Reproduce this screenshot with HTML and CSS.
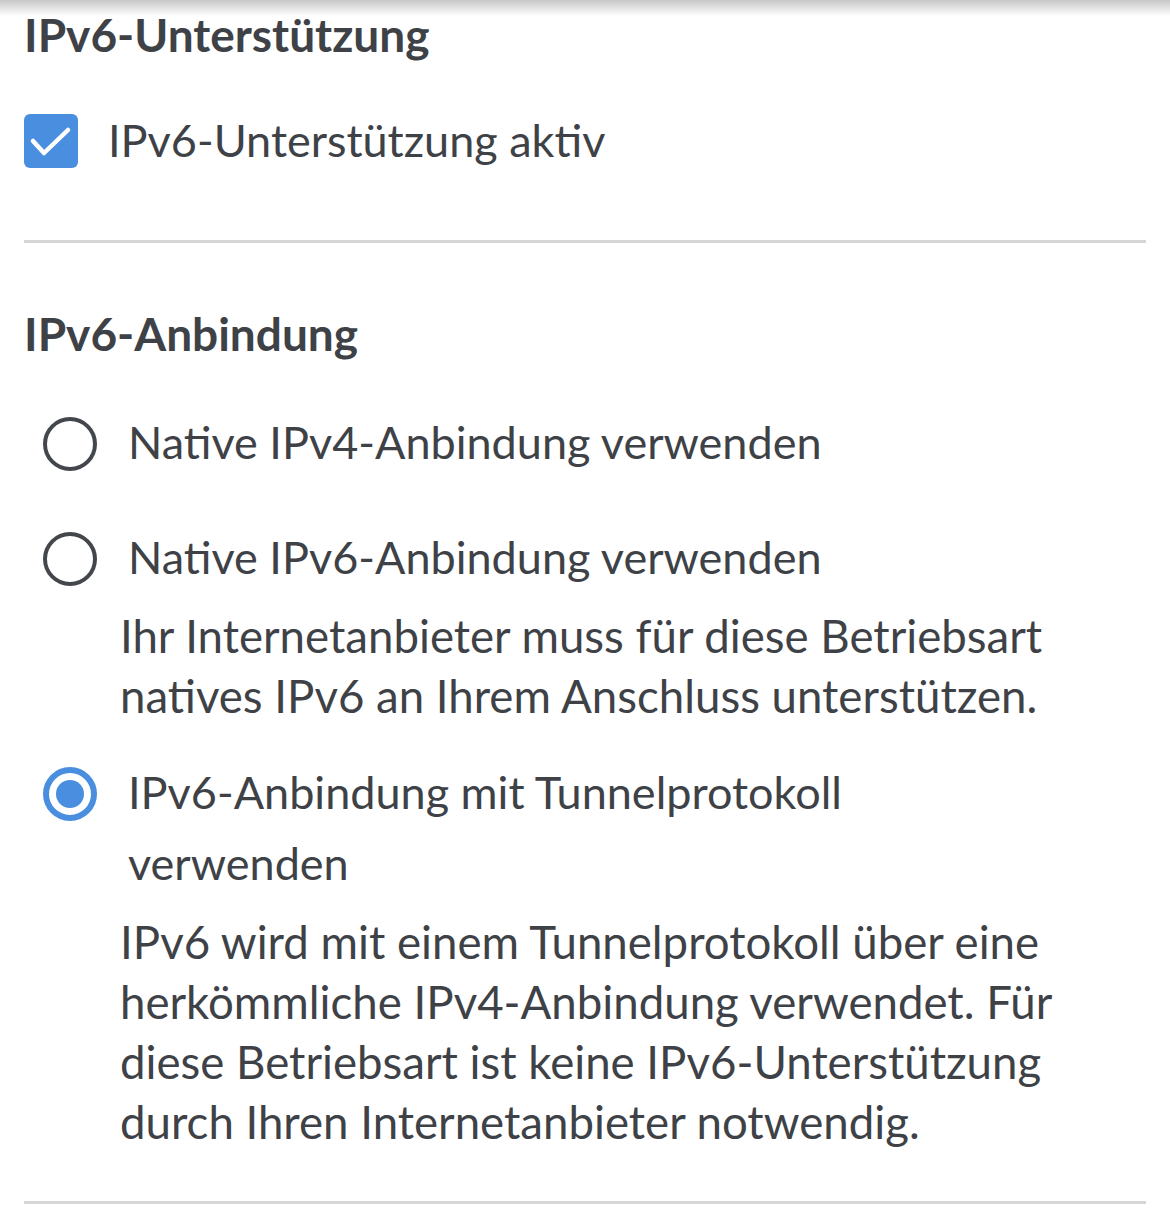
FILE: index.html
```html
<!DOCTYPE html>
<html lang="de">
<head>
<meta charset="utf-8">
<link rel="stylesheet" href="styles.css">
</head>
<body>
<div class="top-shadow"></div>
<main class="page">
  <section class="group">
    <h2 class="group-title">IPv6-Unterstützung</h2>
    <label class="check-row">
      <span class="checkbox">
        <svg viewBox="0 0 54 54" width="54" height="54"><path d="M9 27 L20 39 L44 16" fill="none" stroke="#fff" stroke-width="4.5" stroke-linecap="round" stroke-linejoin="round"/></svg>
      </span>
      <span class="check-label">IPv6-Unterstützung aktiv</span>
    </label>
  </section>
  <hr class="divider">
  <section class="group group-last">
    <h2 class="group-title title-2">IPv6-Anbindung</h2>
    <div class="radio-row">
      <span class="radio"></span>
      <span class="radio-label">Native IPv4-Anbindung verwenden</span>
    </div>
    <div class="radio-row">
      <span class="radio"></span>
      <span class="radio-label">Native IPv6-Anbindung verwenden</span>
    </div>
    <p class="desc">Ihr Internetanbieter muss für diese Betriebsart natives IPv6 an Ihrem Anschluss unterstützen.</p>
    <div class="radio-row after-desc">
      <span class="radio checked"></span>
      <span class="radio-label">IPv6-Anbindung mit Tunnelprotokoll verwenden</span>
    </div>
    <p class="desc">IPv6 wird mit einem Tunnelprotokoll über eine herkömmliche IPv4-Anbindung verwendet. Für diese Betriebsart ist keine IPv6-Unterstützung durch Ihren Internetanbieter notwendig.</p>
  </section>
  <hr class="divider">
</main>
</body>
</html>
```
FILE: styles.css
```css
html, body {
  margin: 0;
  padding: 0;
  background: #ffffff;
}
body {
  font-family: "Lato", "Noto Sans", sans-serif;
  color: #3e4247;
  width: 1170px;
  overflow: hidden;
}
.top-shadow {
  position: absolute;
  left: 0;
  top: 0;
  width: 1170px;
  height: 16px;
  background: linear-gradient(to bottom, rgba(0,0,0,0.22), rgba(0,0,0,0));
}
.page {
  padding: 0 24px;
}
.group-title {
  margin: 0;
  font-size: 46px;
  font-weight: 700;
  line-height: 70px;
}
.title-2 {
  margin-top: 56px;
}
.check-row {
  display: flex;
  align-items: center;
  margin-top: 44px;
  margin-bottom: 72px;
}
.checkbox {
  width: 54px;
  height: 54px;
  border-radius: 6px;
  background: #4a8fdf;
  display: flex;
  flex-shrink: 0;
}
.check-label {
  margin-left: 30px;
  font-size: 45px;
  line-height: 56px;
  margin-top: -3px;
}
.divider {
  border: 0;
  height: 3px;
  background: #d6d6d6;
  margin: 0;
}
.group-last {
  padding-bottom: 48px;
}
.radio-row {
  display: flex;
  align-items: flex-start;
  margin-top: 44px;
  padding-left: 19px;
}
.radio-row.after-desc {
  margin-top: 30px;
}
.title-2 + .radio-row {
  margin-top: 38px;
}
.radio {
  width: 46px;
  height: 46px;
  border: 4px solid #43474c;
  border-radius: 50%;
  flex-shrink: 0;
  margin-top: 10px;
  box-sizing: content-box;
  position: relative;
}
.radio.checked {
  width: 42px;
  height: 42px;
  border: 6px solid #4a8fdf;
}
.radio.checked::after {
  content: "";
  position: absolute;
  left: 7px;
  top: 7px;
  width: 28px;
  height: 28px;
  border-radius: 50%;
  background: #4a8fdf;
}
.radio-label {
  margin-left: 31px;
  font-size: 45px;
  line-height: 71px;
  max-width: 820px;
}
.desc {
  margin: 13px 0 0;
  padding-left: 96px;
  font-size: 45.6px;
  line-height: 60.3px;
  max-width: 960px;
}
```
